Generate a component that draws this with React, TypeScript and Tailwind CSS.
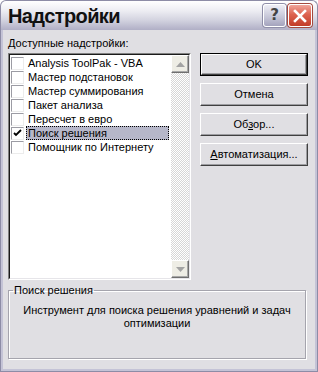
import React from 'react';

const items = [
  { label: 'Analysis ToolPak - VBA', checked: false },
  { label: 'Мастер подстановок', checked: false },
  { label: 'Мастер суммирования', checked: false },
  { label: 'Пакет анализа', checked: false },
  { label: 'Пересчет в евро', checked: false },
  { label: 'Поиск решения', checked: true, selected: true },
  { label: 'Помощник по Интернету', checked: false },
];

function CheckBox({ checked }: { checked: boolean }) {
  return (
    <div className="w-[13px] h-[13px] shrink-0 bg-white border border-t-[#9c9ca4] border-l-[#9c9ca4] border-b-[#ececec] border-r-[#ececec] flex items-center justify-center">
      {checked && (
        <svg width="9" height="9" viewBox="0 0 9 9">
          <path d="M1 4 L3 6 L8 1" stroke="#000" strokeWidth="1.8" fill="none" />
        </svg>
      )}
    </div>
  );
}

function ScrollButton({ down }: { down?: boolean }) {
  return (
    <div className="h-[18px] w-full bg-[#eeede5] border border-t-[#ffffff] border-l-[#ffffff] border-b-[#6f6f6f] border-r-[#6f6f6f] shadow-[inset_-1px_-1px_0_#a8a8a8] flex items-center justify-center">
      <svg width="9" height="5" viewBox="0 0 9 5">
        {down ? <path d="M0 0 H9 L4.5 5 Z" fill="#a3a3a3" /> : <path d="M0 5 H9 L4.5 0 Z" fill="#a3a3a3" />}
      </svg>
    </div>
  );
}

function Btn({ children, isDefault }: { children: React.ReactNode; isDefault?: boolean }) {
  return (
    <div className={isDefault ? 'border border-black' : ''}>
      <div
        className={
          'flex items-center justify-center bg-[#e0dfe3] border border-t-white border-l-white border-b-[#404040] border-r-[#404040] shadow-[inset_-1px_-1px_0_#9d9da1] ' +
          (isDefault ? 'h-[21px]' : 'h-[23px]')
        }
      >
        {children}
      </div>
    </div>
  );
}

export default function App() {
  return (
    <div className="w-[318px] h-[372px] flex flex-col font-['Liberation_Sans',sans-serif] text-[11px] text-black overflow-hidden bg-white">
      {/* Title bar */}
      <div className="h-[30px] shrink-0 flex items-center pl-[7px] pr-[5px] rounded-t-[6px] border border-b-0 border-[#8d8ca6] bg-[linear-gradient(to_bottom,#ffffff_0%,#ececf2_35%,#d4d4e0_65%,#b0afc6_100%)]">
        <span className="text-[20px] font-bold tracking-[-0.6px] text-[#111] leading-none pt-[1px]">Надстройки</span>
        <div className="ml-auto flex gap-[2px] items-center">
          <div className="w-[23px] h-[23px] rounded-[3px] border border-white bg-[linear-gradient(to_bottom,#eeeef5,#c4c4d6_60%,#a4a3bd)] shadow-[0_0_0_1px_#8f8ea8] flex items-center justify-center">
            <span className="font-['DejaVu_Sans',sans-serif] font-bold text-[15px] text-[#444] leading-none">?</span>
          </div>
          <div className="w-[24px] h-[23px] rounded-[3px] border border-white bg-[linear-gradient(to_bottom,#f0a59a,#dd6350_45%,#c23c28)] shadow-[0_0_0_1px_#a34a3f] flex items-center justify-center">
            <svg width="14" height="14" viewBox="0 0 14 14">
              <path d="M2 2 L12 12 M12 2 L2 12" stroke="#fff" strokeWidth="2.6" strokeLinecap="square" />
            </svg>
          </div>
        </div>
      </div>

      {/* Frame + client */}
      <div className="flex-1 flex flex-col border-x border-b border-[#8d8ca6]">
        <div className="flex-1 flex flex-col border-x-2 border-b-2 border-[#c4c3d6]">
          <div className="flex-1 flex flex-col bg-[#e0dfe3] pl-[5px] pr-[5px] pt-[7px]">
            <div className="flex">
              {/* Left column */}
              <div className="w-[183px] flex flex-col">
                <div className="h-[13px] leading-[13px]">
                  <span className="underline">Д</span>оступные надстройки:
                </div>
                <div className="mt-[3px] h-[227px] border border-t-[#808080] border-l-[#808080] border-b-white border-r-white">
                  <div className="h-full border border-t-[#1a1a1a] border-l-[#1a1a1a] border-b-[#e6e5e9] border-r-[#e6e5e9] bg-white flex">
                    <div className="flex-1 flex flex-col pt-[1px] pl-[1px] pr-[2px]">
                      {items.map((it) => (
                        <div key={it.label} className="h-[14px] flex items-center">
                          <CheckBox checked={it.checked} />
                          <div
                            className={
                              'ml-[2px] flex-1 h-[14px] leading-[12px] pl-[1px] whitespace-nowrap ' +
                              (it.selected ? 'bg-[#b6b7c9] border border-dotted border-black' : 'border border-transparent')
                            }
                          >
                            {it.label}
                          </div>
                        </div>
                      ))}
                    </div>
                    <div className="w-[18px] flex flex-col">
                      <ScrollButton />
                      <div className="flex-1 bg-[repeating-conic-gradient(#d6d6d6_0%_25%,#ffffff_0%_50%)] bg-[length:2px_2px]" />
                      <ScrollButton down />
                    </div>
                  </div>
                </div>
              </div>

              {/* Right column */}
              <div className="ml-[9px] w-[108px] flex flex-col gap-[7px] pt-[16px]">
                <Btn isDefault>OK</Btn>
                <Btn>Отмена</Btn>
                <Btn>
                  <span>
                    Об<span className="underline">з</span>ор...
                  </span>
                </Btn>
                <Btn>
                  <span>
                    <span className="underline">А</span>втоматизация...
                  </span>
                </Btn>
              </div>
            </div>

            {/* Group box */}
            <fieldset className="mt-[4px] w-[298px] h-[75px] border border-[#a5a4ad] shadow-[1px_1px_0_#ffffff,inset_1px_1px_0_#ffffff] pl-[4px]">
              <legend className="px-[1px] leading-[13px]">Поиск решения</legend>
              <div className="text-center leading-[13px] mt-[7px] pr-[4px]">
                Инструмент для поиска решения уравнений и задач
                <br />
                оптимизации
              </div>
            </fieldset>
          </div>
        </div>
      </div>
    </div>
  );
}
